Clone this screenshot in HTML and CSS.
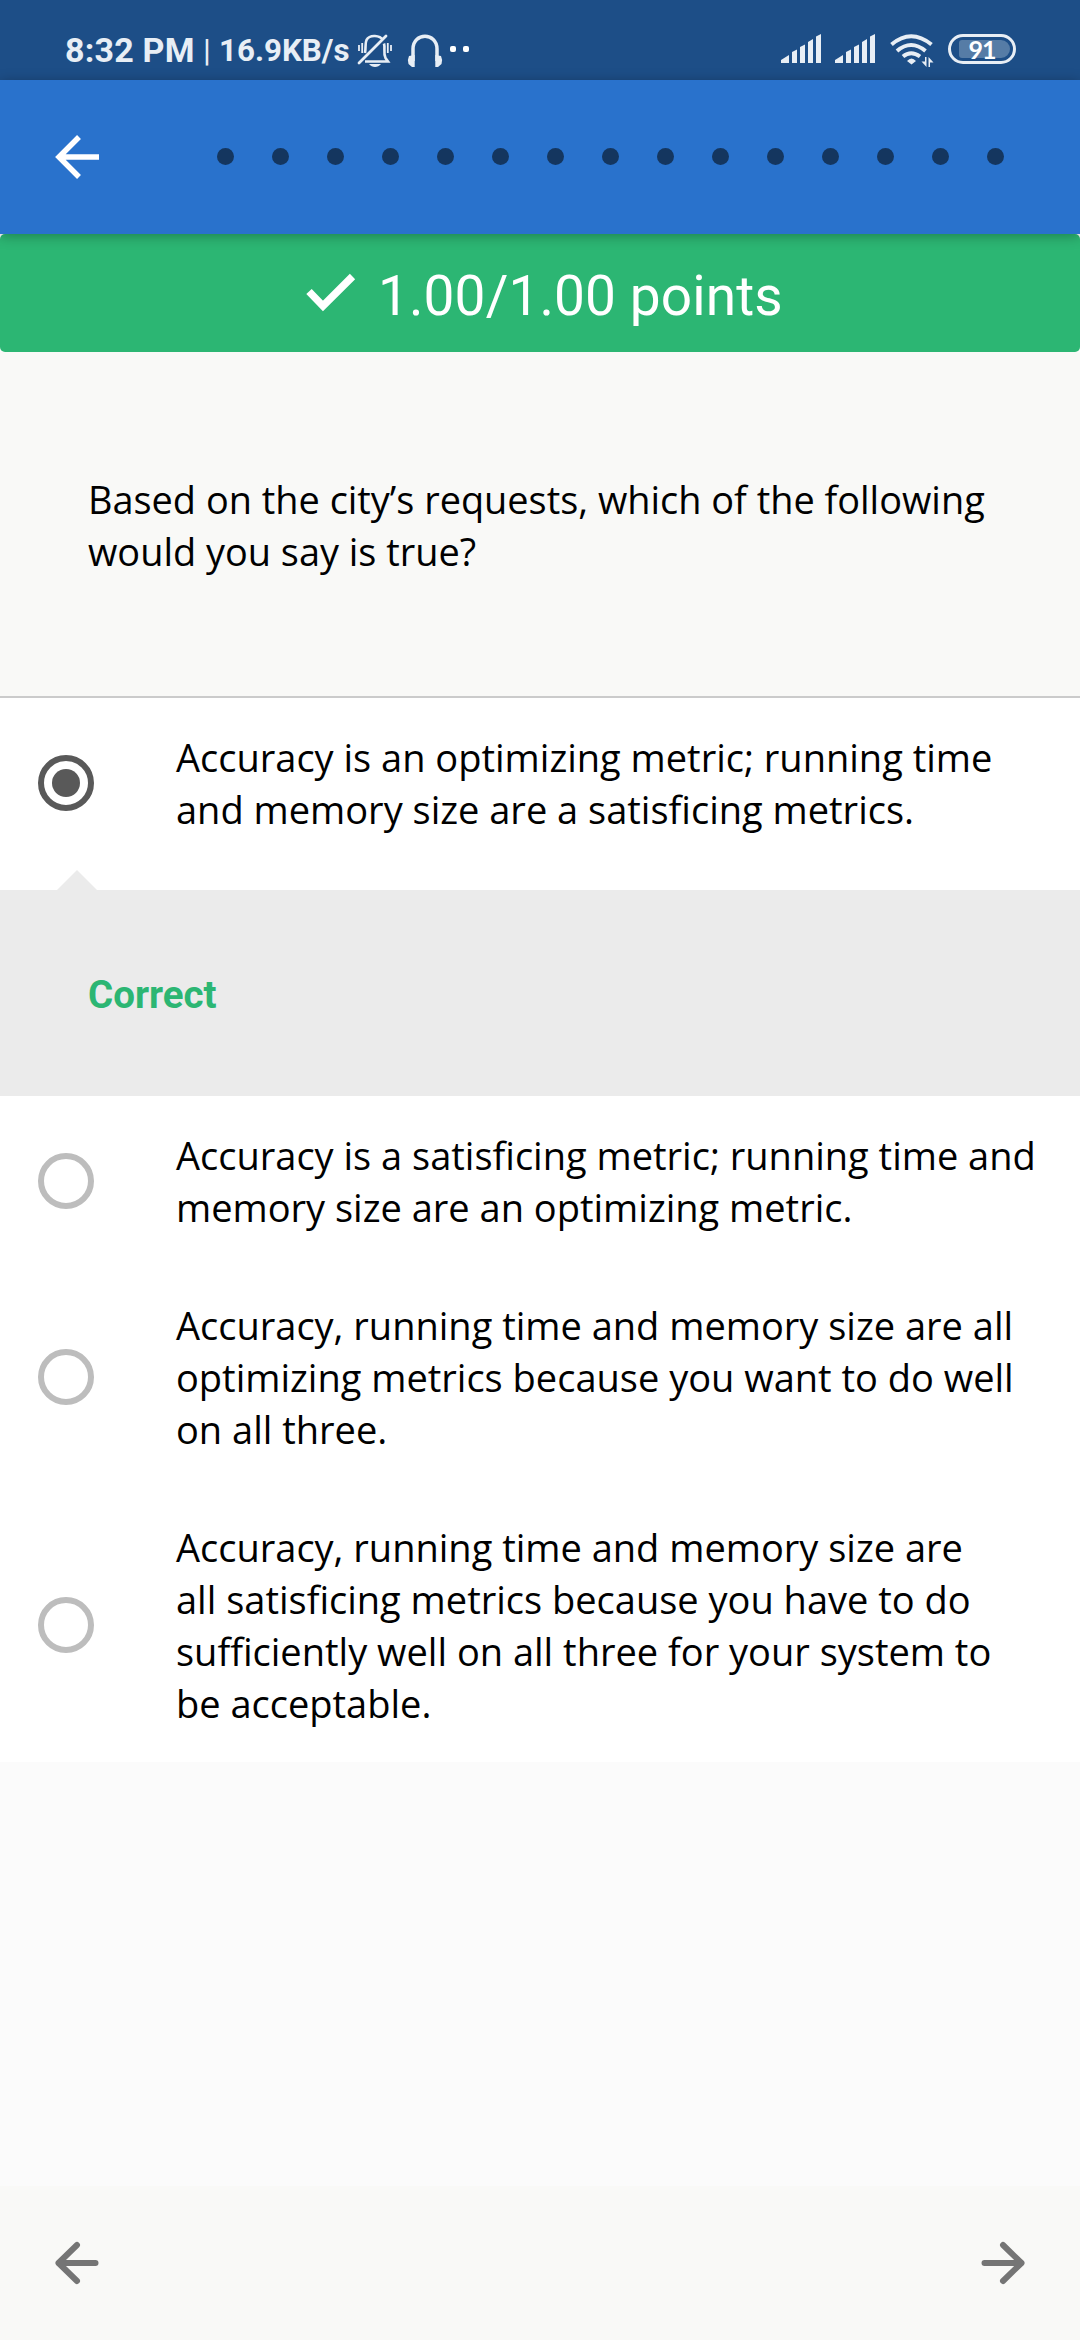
FILE: index.html
```html
<!DOCTYPE html>
<html lang="en">
<head>
<meta charset="utf-8">
<title>Quiz review</title>
<link rel="stylesheet" href="styles.css">
</head>
<body>
<div class="status">
  <span class="time">8:32 PM</span><span class="bar">|</span><span class="rate">16.9KB/s</span>
  <svg class="bell" width="36" height="34" viewBox="0 0 36 34" fill="none" stroke="currentColor" stroke-width="2.6">
    <path d="M26 6C23 1.500 13 0 9.500 6C8 9 9 14 8 19M8 27.500H31L28.500 24C26 19 28.500 14 27 9.500" />
    <path d="M2 29L29 2" stroke-linecap="round" stroke-width="2.8"/>
    <path d="M12 30H24C21 34 15 34 12 30Z" fill="currentColor" stroke="none"/>
    <path d="M5.200 9V19M2 11V17M30.800 9V19M34 11V17" stroke-width="1.800"/>
  </svg>
  <svg class="phones" width="36" height="34" viewBox="0 0 36 34" fill="none" stroke="currentColor">
    <path d="M6 27V15C6 -2 30 -2 30 15V27" stroke-width="3.500"/>
    <path d="M7.700 21V33H5L1.500 30Q0 26 2 22ZM28.300 21V33H31L34.500 30Q36 26 34 22Z" fill="currentColor" stroke="none"/>
  </svg>
  <span class="more"></span><span class="more"></span>
  <svg class="signal first" width="40" height="30" viewBox="0 0 40 30" fill="currentColor"><path d="M0 29V26L8 21V29ZM11 29V18L16 15.500V29ZM19 29V13L24 10.500V29ZM27 29V8L32 5V29ZM35 29V2.500L40 0V29Z"/></svg>
  <svg class="signal" width="40" height="30" viewBox="0 0 40 30" fill="currentColor"><path d="M0 29V26L8 21V29ZM11 29V18L16 15.500V29ZM19 29V13L24 10.500V29ZM27 29V8L32 5V29ZM35 29V2.500L40 0V29Z"/></svg>
  <svg class="wifi" width="44" height="34" viewBox="0 0 44 34" fill="none" stroke="currentColor" stroke-width="4">
    <path d="M1.500 10.500Q21 -6 41.500 10.500M7 17Q21 5 35.500 17M13 22.500Q21 16 30 22.500"/>
    <path d="M17 27Q21.500 22 26 27L21.500 30.500Z" fill="currentColor" stroke="none"/>
    <path d="M36.500 23V33L31.500 27.500H35V23ZM38.500 33V23L43.500 28.500H40V33Z" fill="currentColor" stroke="none"/>
  </svg>
  <span class="battery"><span class="level">91</span></span>
</div>
<header class="appbar">
  <svg class="back" width="44" height="44" viewBox="0 0 44 44" fill="none" stroke="#fff" stroke-width="5.500"><path d="M44 22H4M24 2L4 22L24 42"/></svg>
  <div class="dots"><i></i><i></i><i></i><i></i><i></i><i></i><i></i><i></i><i></i><i></i><i></i><i></i><i></i><i></i><i></i></div>
</header>
<main>
  <div class="score">
    <svg width="50" height="40" viewBox="0 0 50 40" fill="none" stroke="#fff" stroke-width="7.500"><path d="M3 18.500L17 33L46.500 3.500"/></svg>
    <span>1.00/1.00 points</span>
  </div>
  <p class="question">Based on the city’s requests, which of the following<br>would you say is true?</p>
  <div class="option"><span class="radio checked"></span><p>Accuracy is an optimizing metric; running time<br>and memory size are a satisficing metrics.</p></div>
  <div class="feedback">Correct</div>
  <div class="option"><span class="radio"></span><p>Accuracy is a satisficing metric; running time and<br>memory size are an optimizing metric.</p></div>
  <div class="option"><span class="radio"></span><p>Accuracy, running time and memory size are all<br>optimizing metrics because you want to do well<br>on all three.</p></div>
  <div class="option"><span class="radio"></span><p>Accuracy, running time and memory size are<br>all satisficing metrics because you have to do<br>sufficiently well on all three for your system to<br>be acceptable.</p></div>
</main>
<footer class="pager">
  <svg width="44" height="44" viewBox="0 0 44 44"><path d="M40.500 22H3.500M22 4L3.500 22L22 40"/></svg>
  <svg width="44" height="44" viewBox="0 0 44 44"><path d="M3.500 22H40.500M22 4L40.500 22L22 40"/></svg>
</footer>
</body>
</html>
```

FILE: styles.css
```css
* { box-sizing: border-box; }
body {
  margin: 0;
  width: 1080px;
  height: 2340px;
  display: flex;
  flex-direction: column;
  background: #fbfbfb;
  color: #000;
  font-family: "Open Sans", sans-serif;
  font-size: 38px;
  overflow: hidden;
}
p { margin: 0; }
svg { display: block; flex: none; }

.status {
  height: 80px;
  flex: none;
  display: flex;
  align-items: flex-start;
  padding: 34px 64px 0 65px;
  background: #1d4e87;
  color: #e8eef5;
  font-family: Roboto, sans-serif;
  font-weight: 700;
  line-height: 33px;
  white-space: nowrap;
}
.time { width: 138px; font-size: 34px; letter-spacing: 0.2px; }
.bar { width: 16px; font-size: 32px; font-weight: 400; }
.rate { width: 138px; font-size: 31.3px; }
.phones { margin-left: 14px; }
.more { width: 6px; height: 6px; border-radius: 2px; background: #fff; margin: 12px 0 0 7px; }
.signal { margin-left: 14px; }
.first { margin-left: auto; }
.wifi { margin-left: 15px; }
.battery {
  width: 68px;
  height: 30px;
  margin-left: 14px;
  padding: 3px;
  border: 3px solid;
  border-radius: 15px;
}
.level {
  display: block;
  width: 51px;
  height: 18px;
  margin-left: 5px;
  padding-right: 5px;
  background: #567ca6;
  border-radius: 3px 9px 9px 3px;
  color: #fff;
  font: bold 25px/18px Lato, sans-serif;
  letter-spacing: -1px;
  text-align: center;
}

.appbar {
  height: 154px;
  flex: none;
  display: flex;
  align-items: center;
  padding-left: 55px;
  background: #2972cc;
  box-shadow: 0 2px 12px rgba(0, 0, 0, 0.3);
  z-index: 1;
}
.dots { display: flex; gap: 38px; margin: -1px 0 0 118px; }
.dots i { width: 17px; height: 17px; border-radius: 50%; background: #14365f; }

main { flex: 1; }
.score {
  height: 118px;
  display: flex;
  align-items: center;
  padding-left: 306px;
  background: #2cb673;
  border-radius: 5px;
  color: #fff;
  font: 55px/64px Roboto, sans-serif;
}
.score span { margin-left: 22px; padding-top: 5px; letter-spacing: 0.1px; white-space: nowrap; }
.question {
  height: 346px;
  padding: 121px 0 0 88px;
  background: #f9f9f7;
  border-bottom: 2px solid #cbcbcb;
  font-size: 37.9px;
  line-height: 52px;
  white-space: nowrap;
}
.option {
  display: flex;
  align-items: center;
  padding: 33px 0 33px 38px;
  background: #fff;
  line-height: 52px;
  white-space: nowrap;
}
.option p { margin-left: 82px; }
.radio {
  width: 56px;
  height: 56px;
  flex: none;
  display: grid;
  place-items: center;
  border: 6px solid #bdbdbd;
  border-radius: 50%;
}
.checked { border-color: #595959; }
.checked::after { content: ""; width: 28px; height: 28px; border-radius: 50%; background: #595959; }
.feedback {
  position: relative;
  height: 206px;
  margin-top: 22px;
  padding-left: 88px;
  background: #ebebeb;
  box-shadow: 0 -22px #fff;
  color: #2cb673;
  font: bold 38.5px/210px Roboto, sans-serif;
}
.feedback::before {
  content: "";
  position: absolute;
  left: 57px;
  top: -20px;
  border: solid transparent;
  border-width: 0 20px 20px;
  border-bottom-color: #ebebeb;
}
.pager {
  height: 154px;
  flex: none;
  display: flex;
  justify-content: space-between;
  align-items: center;
  padding: 0 55px;
  background: #f9f9f7;
}
.pager path { fill: none; stroke: #757575; stroke-width: 6px; stroke-linecap: round; stroke-linejoin: round; }
```
